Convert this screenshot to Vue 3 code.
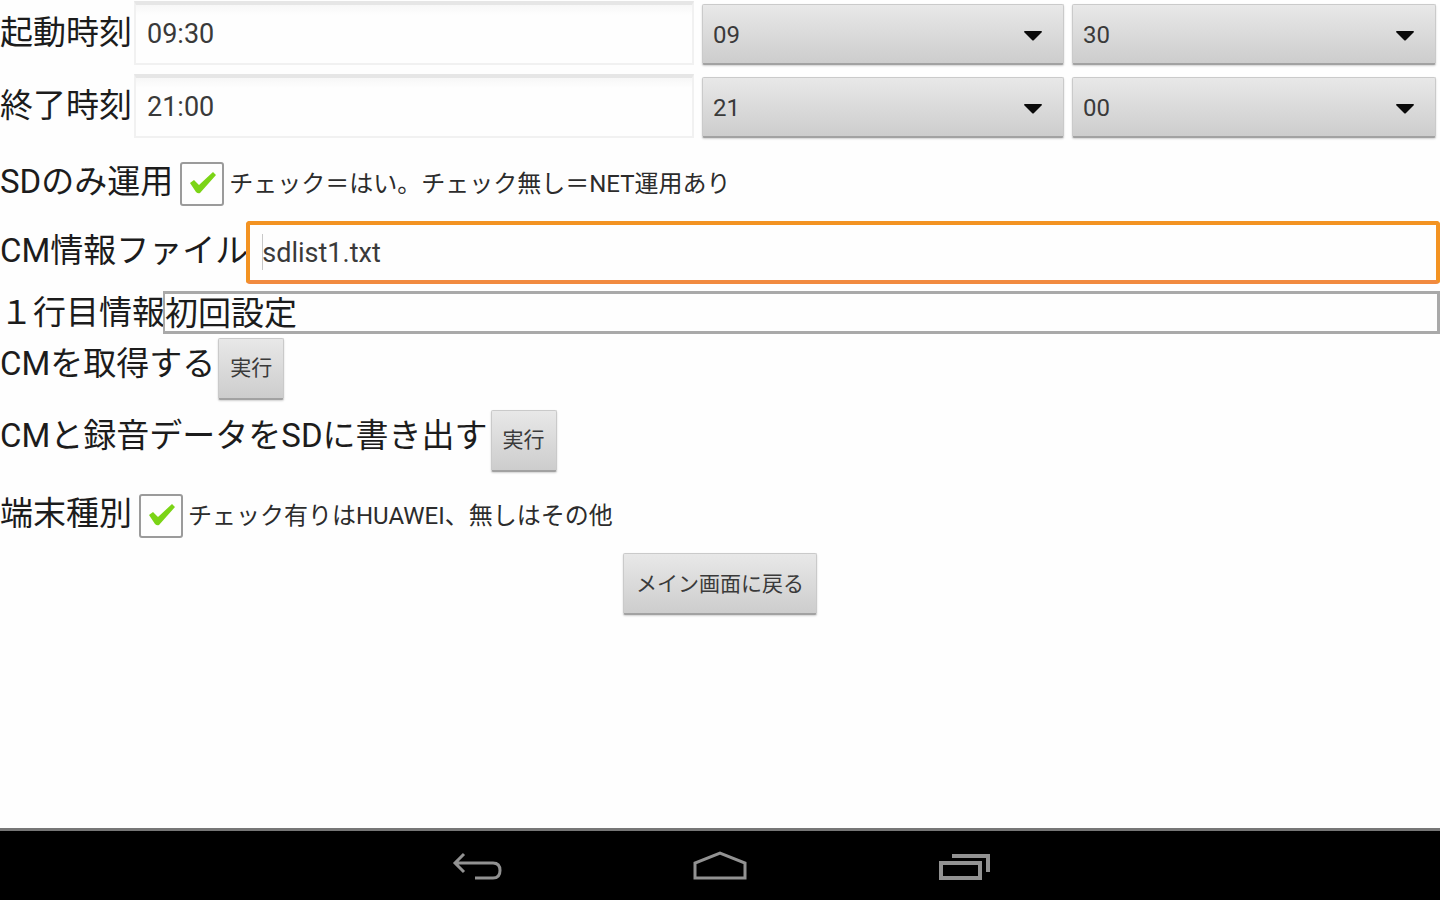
<script setup>
import { ref } from 'vue'

const times = ref([
  { id: 'start', label: '起動時刻', value: '09:30', hour: '09', minute: '30' },
  { id: 'end', label: '終了時刻', value: '21:00', hour: '21', minute: '00' },
])
const hours = Array.from({ length: 24 }, (_, i) => String(i).padStart(2, '0'))
const minutes = Array.from({ length: 60 }, (_, i) => String(i).padStart(2, '0'))
const sdOnly = ref(true)
const huawei = ref(true)
const cmFile = ref('sdlist1.txt')
const firstLine = ref('初回設定')
</script>

<template>
  <div class="screen">
    <main class="settings">
      <div v-for="t in times" :key="t.id" class="time-row">
        <label class="title" :for="t.id">{{ t.label }}</label>
        <input :id="t.id" v-model="t.value" class="field" type="text" />
        <div class="spinner">
          <select v-model="t.hour" :aria-label="t.label + ' 時'">
            <option v-for="h in hours" :key="h">{{ h }}</option>
          </select>
          <svg viewBox="0 0 18 10" aria-hidden="true"><path d="M0 1Q0 0 1 0H17Q18 0 18 1L10 9Q9 10 8 9Z" /></svg>
        </div>
        <div class="spinner">
          <select v-model="t.minute" :aria-label="t.label + ' 分'">
            <option v-for="m in minutes" :key="m">{{ m }}</option>
          </select>
          <svg viewBox="0 0 18 10" aria-hidden="true"><path d="M0 1Q0 0 1 0H17Q18 0 18 1L10 9Q9 10 8 9Z" /></svg>
        </div>
      </div>

      <div class="row check-row">
        <label class="title" for="sd-only">SDのみ運用</label>
        <span class="check">
          <input id="sd-only" v-model="sdOnly" type="checkbox" />
          <svg v-if="sdOnly" viewBox="0 0 28 24" aria-hidden="true"><path d="M1 12L5 9L10 14L24 1L27 4L11 22Q9 23 7 21Z" /></svg>
        </span>
        <label class="note" for="sd-only">チェック＝はい。チェック無し＝NET運用あり</label>
      </div>

      <div class="row file-row">
        <label class="title" for="cm-file">CM情報ファイル</label>
        <span class="focus-box">
          <input id="cm-file" v-model="cmFile" type="text" />
        </span>
      </div>

      <div class="row info-row">
        <label class="title" for="first-line">１行目情報</label>
        <input id="first-line" v-model="firstLine" class="info" type="text" readonly />
      </div>

      <div class="row action-row">
        <span id="get-cm" class="title">CMを取得する</span>
        <button type="button" aria-describedby="get-cm">実行</button>
      </div>

      <div class="row action-row">
        <span id="export-cm" class="title">CMと録音データをSDに書き出す</span>
        <button type="button" aria-describedby="export-cm">実行</button>
      </div>

      <div class="row check-row">
        <label class="title" for="huawei">端末種別</label>
        <span class="check">
          <input id="huawei" v-model="huawei" type="checkbox" />
          <svg v-if="huawei" viewBox="0 0 28 24" aria-hidden="true"><path d="M1 12L5 9L10 14L24 1L27 4L11 22Q9 23 7 21Z" /></svg>
        </span>
        <label class="note" for="huawei">チェック有りはHUAWEI、無しはその他</label>
      </div>

      <div class="back-row">
        <button type="button">メイン画面に戻る</button>
      </div>
    </main>

    <nav class="navbar">
      <button type="button" aria-label="戻る">
        <svg width="56" height="36" viewBox="0 0 56 36"><path d="M14 5L5 14L14 23M6 14H43Q50 14 50 21.500Q50 29 43 29H25" stroke-width="3" /></svg>
      </button>
      <button type="button" aria-label="ホーム">
        <svg width="56" height="36" viewBox="0 0 56 36"><path d="M3 29V14L28 4L53 14V29Z" stroke-width="3" /></svg>
      </button>
      <button type="button" aria-label="最近使ったアプリ">
        <svg width="56" height="36" viewBox="0 0 56 36"><path d="M7 14H46V29H7ZM18 7H54V23" stroke-width="4" /></svg>
      </button>
    </nav>
  </div>
</template>

<style>
body {
  margin: 0;
  background: #fefefe;
}
</style>

<style scoped>
.screen {
  min-height: 100vh;
  display: flex;
  flex-direction: column;
  background: #fefefe;
  color: #1c1c1c;
  font-family: Roboto, "Noto Sans CJK JP", sans-serif;
}

input,
select,
button {
  box-sizing: border-box;
  margin: 0;
  font-family: inherit;
  color: #3a3a3a;
  appearance: none;
  border-radius: 0;
  outline: none;
}

.settings {
  flex: 1;
}

.title {
  flex: none;
  font-size: 33px;
  line-height: 40px;
  padding-bottom: 4px;
  white-space: nowrap;
}

.time-row {
  display: grid;
  grid-template-columns: 134px 560fr 370fr 372fr;
  align-items: center;
  padding-right: 4px;
  margin-bottom: 8px;
}

.time-row .title,
.info-row .title {
  padding-bottom: 0;
}

.field {
  width: 100%;
  height: 64px;
  padding: 0 11px;
  font-size: 27px;
  border: 2px solid #f1f1f1;
  border-top: 4px solid #e6e6e6;
  background: linear-gradient(#f7f7f7, #fefefe 10px);
}

.spinner {
  position: relative;
  padding: 4px 0 0 8px;
}

.spinner select {
  display: block;
  width: 100%;
  height: 61px;
  padding: 2px 10px 0;
  font-size: 24px;
}

.spinner svg {
  position: absolute;
  right: 22px;
  top: 31px;
  width: 18px;
  height: 10px;
  fill: #0a0a0a;
  pointer-events: none;
}

.spinner select,
.action-row button,
.back-row button {
  border: 1px solid #cacaca;
  border-bottom: 2px solid #a2a2a2;
  border-radius: 2px;
  background: linear-gradient(#e8e8e8, #cdcdcd);
  box-shadow: 0 1px 2px #d0d0d0;
}

.row {
  display: flex;
  align-items: center;
}

.check-row {
  height: 75px;
}

.check {
  position: relative;
  display: flex;
  margin: 0 5px 0 7px;
}

.check input {
  width: 44px;
  height: 44px;
  border: 2px solid #9b9b9b;
  border-radius: 3px;
  background: #fefefe;
}

.check svg {
  position: absolute;
  left: 9px;
  top: 9px;
  width: 28px;
  height: 24px;
  fill: #7bd416;
  pointer-events: none;
}

.note {
  font-size: 24px;
  line-height: 32px;
  color: #2c2c2c;
  white-space: nowrap;
}

.focus-box {
  position: relative;
  flex: 1;
  margin-left: -2px;
}

.focus-box::before {
  content: "";
  position: absolute;
  left: 16px;
  top: 13px;
  width: 1px;
  height: 36px;
  background: #c8c8c8;
}

.focus-box input {
  display: block;
  width: 100%;
  height: 63px;
  padding: 0 12px;
  font-size: 27px;
  border: 4px solid #f39322;
  border-bottom-color: #f18a40;
  border-radius: 4px;
  background: #fefefe;
}

.info-row {
  margin-top: 7px;
}

.info {
  flex: 1;
  min-width: 0;
  height: 43px;
  margin-left: -2px;
  padding: 0 0 3px;
  font-size: 33px;
  line-height: 34px;
  color: #1c1c1c;
  border: 3px solid #a9a9a9;
  border-left-width: 2px;
  background: #fefefe;
}

.action-row {
  padding-top: 4px;
  margin-bottom: 6px;
}

.action-row .title {
  padding-bottom: 10px;
}

.action-row button {
  width: 66px;
  height: 62px;
  margin-left: 3px;
  padding: 0 0 6px;
  font-size: 21px;
}

.back-row {
  display: flex;
  justify-content: center;
}

.back-row button {
  height: 62px;
  padding: 0 12px 4px;
  font-size: 21px;
}

.navbar {
  height: 69px;
  display: flex;
  justify-content: center;
  align-items: center;
  gap: 186px;
  background: #000;
  border-top: 3px solid #777;
}

.navbar button {
  padding: 2px 0 0;
  border: 0;
  background: none;
}

.navbar svg {
  display: block;
  fill: none;
  stroke: #929292;
}
</style>
